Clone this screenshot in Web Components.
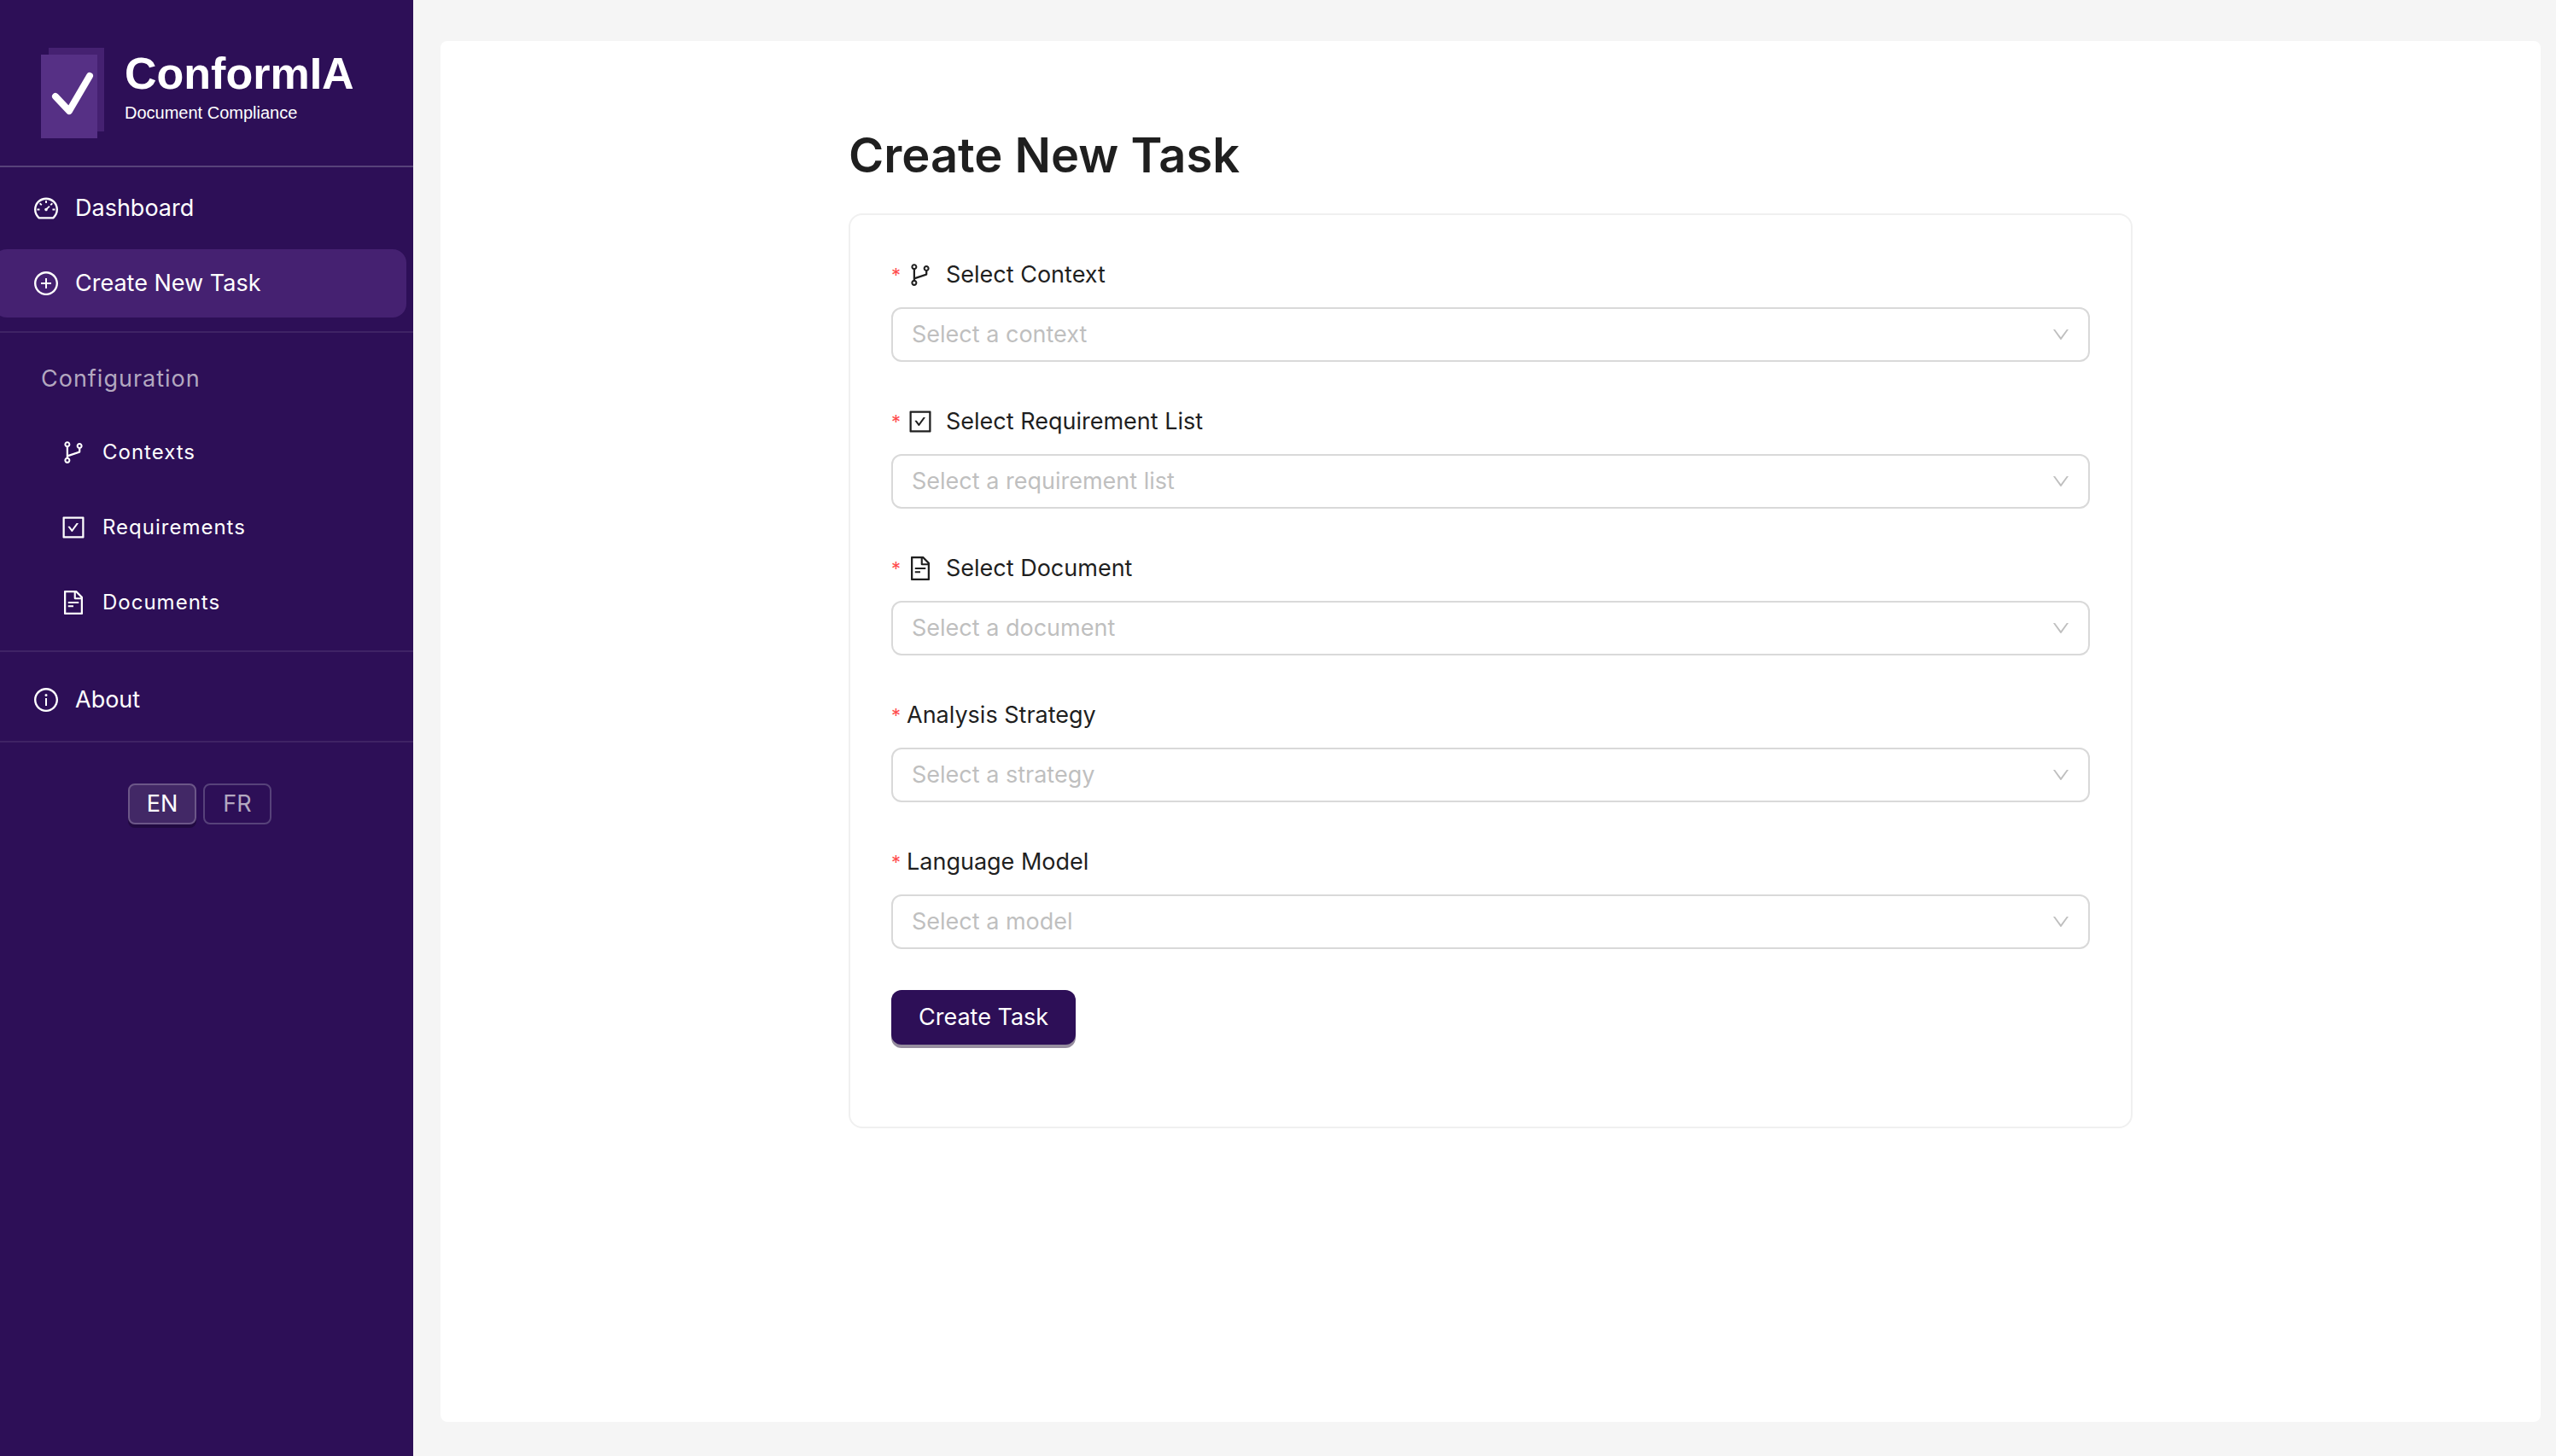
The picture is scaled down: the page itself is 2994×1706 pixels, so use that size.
<!DOCTYPE html>
<html lang="en">
<head>
<meta charset="utf-8">
<title>ConformIA</title>
<style>
  html, body { margin: 0; }
  body {
    font-family: Inter, "Liberation Sans", sans-serif;
    font-size: 27px;
    line-height: 44px;
    color: #1f1f1f;
    background: #f5f5f5;
    --brand: #2d0f57;
    --brand-active: #452171;
  }
</style>
</head>
<body>
<app-layout>
  <side-bar slot="side">
    <brand-logo slot="brand"></brand-logo>
    <nav-item icon="dashboard">Dashboard</nav-item>
    <nav-item icon="plus" active>Create New Task</nav-item>
    <nav-divider></nav-divider>
    <nav-group label="Configuration">
      <nav-item icon="branches" sub>Contexts</nav-item>
      <nav-item icon="check" sub>Requirements</nav-item>
      <nav-item icon="file" sub>Documents</nav-item>
    </nav-group>
    <nav-divider></nav-divider>
    <nav-item icon="info">About</nav-item>
    <nav-divider></nav-divider>
    <lang-switch slot="foot"></lang-switch>
  </side-bar>
  <task-form heading="Create New Task">
    <select-field icon="branches" label="Select Context" placeholder="Select a context"></select-field>
    <select-field icon="check" label="Select Requirement List" placeholder="Select a requirement list"></select-field>
    <select-field icon="file" label="Select Document" placeholder="Select a document"></select-field>
    <select-field label="Analysis Strategy" placeholder="Select a strategy"></select-field>
    <select-field label="Language Model" placeholder="Select a model"></select-field>
  </task-form>
</app-layout>

<script>
const RING = 'M512 64C264.6 64 64 264.6 64 512s200.6 448 448 448 448-200.6 448-448S759.4 64 512 64zm0 820c-205.4 0-372-166.6-372-372s166.6-372 372-372 372 166.6 372 372-166.6 372-372 372z';
const ICONS = {
  dashboard: 'M924.8 385.6a446.7 446.7 0 00-96-142.4 446.7 446.7 0 00-142.4-96C631.1 123.8 572.5 112 512 112s-119.1 11.8-174.4 35.2a446.7 446.7 0 00-142.4 96 446.7 446.7 0 00-96 142.4C75.8 440.9 64 499.5 64 560c0 132.7 58.3 257.7 159.9 343.1l1.7 1.4c5.8 4.8 13.1 7.5 20.6 7.5h531.7c7.5 0 14.8-2.7 20.6-7.5l1.7-1.4C901.7 817.7 960 692.7 960 560c0-60.5-11.9-119.1-35.2-174.4zM761.4 836H262.6A371.12 371.12 0 01140 560c0-99.4 38.7-192.8 109-263 70.3-70.3 163.7-109 263-109 99.4 0 192.8 38.7 263 109 70.3 70.3 109 163.7 109 263 0 105.6-44.5 205.5-122.6 276zM623.5 421.5a8.03 8.03 0 00-11.3 0L527.7 506c-18.7-5-39.4-.2-54.1 14.5a55.95 55.95 0 000 79.2 55.95 55.95 0 0079.2 0 55.87 55.87 0 0014.5-54.1l84.5-84.5c3.1-3.1 3.1-8.2 0-11.3l-28.3-28.3zM490 320h44c4.4 0 8-3.6 8-8v-80c0-4.4-3.6-8-8-8h-44c-4.4 0-8 3.6-8 8v80c0 4.4 3.6 8 8 8zm260 218v44c0 4.4 3.6 8 8 8h80c4.4 0 8-3.6 8-8v-44c0-4.4-3.6-8-8-8h-80c-4.4 0-8 3.6-8 8zm12.7-197.2l-31.1-31.1a8.03 8.03 0 00-11.3 0l-56.6 56.6a8.03 8.03 0 000 11.3l31.1 31.1c3.1 3.1 8.2 3.1 11.3 0l56.6-56.6c3.1-3.1 3.1-8.2 0-11.3zm-458.6-31.1a8.03 8.03 0 00-11.3 0l-31.1 31.1a8.03 8.03 0 000 11.3l56.6 56.6c3.1 3.1 8.2 3.1 11.3 0l31.1-31.1c3.1-3.1 3.1-8.2 0-11.3l-56.6-56.6zM262 530h-80c-4.4 0-8 3.6-8 8v44c0 4.4 3.6 8 8 8h80c4.4 0 8-3.6 8-8v-44c0-4.4-3.6-8-8-8z',
  plus: RING + 'M696 480H544V328c0-4.4-3.6-8-8-8h-48c-4.4 0-8 3.6-8 8v152H328c-4.4 0-8 3.6-8 8v48c0 4.4 3.6 8 8 8h152v152c0 4.4 3.6 8 8 8h48c4.4 0 8-3.6 8-8V544h152c4.4 0 8-3.6 8-8v-48c0-4.4-3.6-8-8-8z',
  info: RING + 'M464 336a48 48 0 1096 0 48 48 0 10-96 0zm72 112h-48c-4.4 0-8 3.6-8 8v272c0 4.4 3.6 8 8 8h48c4.4 0 8-3.6 8-8V456c0-4.4-3.6-8-8-8z',
  branches: 'M740 161c-61.8 0-112 50.2-112 112 0 50.1 33.1 92.6 78.5 106.9v95.9L320 602.4V318.1c44.2-15 76-56.9 76-106.1 0-61.8-50.2-112-112-112s-112 50.2-112 112c0 49.2 31.8 91 76 106.1V706c-44.2 15-76 56.9-76 106.1 0 61.8 50.2 112 112 112s112-50.2 112-112c0-49.2-31.8-91-76-106.1v-27.8l423.5-138.7a50.52 50.52 0 0034.9-48.2V378.2c42.9-15.8 73.6-57 73.6-105.2 0-61.8-50.2-112-112-112zm-504 51a48.01 48.01 0 0196 0 48.01 48.01 0 01-96 0zm96 600a48.01 48.01 0 01-96 0 48.01 48.01 0 0196 0zm408-491a48.01 48.01 0 010-96 48.01 48.01 0 010 96z',
  check: 'M433.1 657.7a31.8 31.8 0 0051.7 0l210.6-292c3.8-5.3 0-12.7-6.5-12.7H642c-10.2 0-19.9 4.9-25.9 13.3L459 584.3l-71.2-98.8c-6-8.3-15.6-13.3-25.9-13.3H315c-6.5 0-10.3 7.4-6.5 12.7l124.6 172.8zM880 112H144c-17.7 0-32 14.3-32 32v736c0 17.7 14.3 32 32 32h736c17.7 0 32-14.3 32-32V144c0-17.7-14.3-32-32-32zm-40 728H184V184h656v656z',
  file: 'M854.6 288.6L639.4 73.4c-6-6-14.1-9.4-22.6-9.4H192c-17.7 0-32 14.3-32 32v832c0 17.7 14.3 32 32 32h640c17.7 0 32-14.3 32-32V311.3c0-8.5-3.4-16.7-9.4-22.7zM790.2 326H602V137.8L790.2 326zm1.8 562H232V136h302v216a42 42 0 0042 42h216v494zM504 618H320c-4.4 0-8 3.6-8 8v48c0 4.4 3.6 8 8 8h184c4.4 0 8-3.6 8-8v-48c0-4.4-3.6-8-8-8zM312 490v48c0 4.4 3.6 8 8 8h384c4.4 0 8-3.6 8-8v-48c0-4.4-3.6-8-8-8H320c-4.4 0-8 3.6-8 8z',
  down: 'M884 256h-75c-5.1 0-9.9 2.5-12.9 6.6L512 654.2 227.9 262.6c-3-4.1-7.8-6.6-12.9-6.6h-75c-6.5 0-10.3 7.4-6.5 12.7l352.6 486.1c12.8 17.6 39 17.6 51.7 0l352.6-486.1c3.9-5.3.1-12.7-6.4-12.7z'
};

const define = (name, render) => customElements.define(name, class extends HTMLElement {
  connectedCallback() {
    if (!this.shadowRoot) this.attachShadow({ mode: 'open' }).innerHTML = render(this);
  }
});

define('ui-icon', el => `
  <style>
    :host { display: block; flex: none; width: 32px; height: 32px; }
    svg { display: block; width: 100%; height: 100%; fill: currentColor; }
  </style>
  <svg viewBox="0 0 1024 1024" aria-hidden="true"><path fill-rule="evenodd" d="${ICONS[el.getAttribute('name')]}"/></svg>`);

define('app-layout', () => `
  <style>
    :host { display: flex; min-height: 100vh; }
    ::slotted([slot=side]) { flex: none; width: 484px; }
    main {
      flex: 1; min-width: 0; margin: 48px 18px 40px 32px;
      padding: 96px 48px; box-sizing: border-box;
      background: #fff; border-radius: 8px;
    }
  </style>
  <slot name="side"></slot>
  <main><slot></slot></main>`);

define('side-bar', () => `
  <style>
    :host { display: block; overflow: hidden; background: var(--brand); color: #fff; }
    header { padding: 56px 48px 32px; border-bottom: 2px solid #57427a; }
    nav { display: flex; flex-direction: column; padding-top: 8px; }
    footer { padding: 48px 16px 48px 0; }
  </style>
  <header><slot name="brand"></slot></header>
  <nav><slot></slot></nav>
  <footer><slot name="foot"></slot></footer>`);

define('brand-logo', () => `
  <style>
    :host { display: flex; gap: 24px; font-family: "Liberation Sans", sans-serif; }
    svg { display: block; flex: none; width: 74px; height: 106px; }
    .name { font-size: 52px; line-height: 60px; font-weight: 700; }
    .tag { margin-top: 2px; font-size: 20px; line-height: 28px; }
  </style>
  <svg viewBox="0 0 74 106" aria-hidden="true">
    <rect x="9" y="0" width="65" height="98" fill="#452171"/>
    <rect x="0" y="8" width="66" height="98" fill="#563085"/>
    <path d="M17 57L33 74L57 33" fill="none" stroke="#fff" stroke-width="8" stroke-linecap="round" stroke-linejoin="round"/>
  </svg>
  <div><div class="name">ConformIA</div><div class="tag">Document Compliance</div></div>`);

define('nav-divider', () => `
  <style>
    :host { display: block; flex: none; height: 2px; margin: 8px 0 16px; background: #3f2365; }
    :host(:last-of-type) { margin: 0; }
  </style>`);

define('nav-item', el => `
  <style>
    :host { display: block; }
    a {
      display: flex; align-items: center; gap: 18px; box-sizing: border-box;
      height: 80px; margin: 0 8px 8px -8px; padding-left: 46px;
      border-radius: 16px; color: #fff; text-decoration: none;
    }
    :host([active]) a { background: var(--brand-active); }
    :host([sub]) a { padding-left: 78px; font-size: 24px; letter-spacing: 1px; }
  </style>
  <a href="#"${el.hasAttribute('active') ? ' aria-current="page"' : ''}>
    <ui-icon name="${el.getAttribute('icon')}"></ui-icon><span><slot></slot></span>
  </a>`);

define('nav-group', el => `
  <style>
    :host { display: block; }
    h2 { margin: 0; padding: 16px 48px 24px; font-size: 27px; line-height: 44px; font-weight: 400; color: #b3a8c0; letter-spacing: 1px; }
  </style>
  <h2>${el.getAttribute('label')}</h2>
  <slot></slot>`);

define('lang-switch', () => `
  <style>
    :host { display: flex; justify-content: center; gap: 8px; }
    button {
      width: 80px; height: 48px; padding: 0; font: inherit; line-height: 44px;
      color: #b3a8c0; background: transparent; border: 2px solid #57427a; border-radius: 8px;
    }
    button[aria-pressed=true] { color: #fff; background: #422866; border-color: #6c5788; box-shadow: 0 4px 0 #210a41; }
  </style>
  <button type="button" aria-pressed="true">EN</button>
  <button type="button" aria-pressed="false">FR</button>`);

define('task-form', el => `
  <style>
    :host { display: block; max-width: 1504px; margin: 0 auto; }
    h1 { margin: 0 0 30px; font-size: 56px; line-height: 76px; font-weight: 600; }
    form {
      display: flex; flex-direction: column; align-items: stretch; gap: 48px;
      padding: 48px 48px 96px; border: 2px solid #f0f0f0; border-radius: 16px;
    }
    button {
      align-self: flex-start; height: 64px; padding: 0 32px; border: 0; border-radius: 12px;
      font: inherit; color: #fff; background: var(--brand); box-shadow: 0 4px 0 #968d9f;
    }
  </style>
  <h1>${el.getAttribute('heading')}</h1>
  <form>
    <slot></slot>
    <button type="button">Create Task</button>
  </form>`);

define('select-field', el => `
  <style>
    :host { display: block; }
    label { display: flex; align-items: center; margin-bottom: 16px; line-height: 44px; }
    .mark { width: 18px; color: #ff4d4f; font-size: 22px; }
    label ui-icon { margin-right: 14px; }
    .box { display: grid; align-items: center; }
    .box > * { grid-area: 1 / 1; }
    select {
      appearance: none; width: 100%; height: 64px; margin: 0; padding: 0 60px 0 22px;
      font: inherit; color: #bfbfbf; background: #fff;
      border: 2px solid #d9d9d9; border-radius: 12px;
    }
    .box ui-icon { justify-self: end; width: 24px; height: 24px; margin-right: 22px; color: #bfbfbf; pointer-events: none; }
  </style>
  <label for="field"><span class="mark">*</span>${el.hasAttribute('icon') ? `<ui-icon name="${el.getAttribute('icon')}"></ui-icon>` : ''}<span>${el.getAttribute('label')}</span></label>
  <div class="box">
    <select id="field" required><option value="">${el.getAttribute('placeholder')}</option></select>
    <ui-icon name="down"></ui-icon>
  </div>`);
</script>
</body>
</html>
